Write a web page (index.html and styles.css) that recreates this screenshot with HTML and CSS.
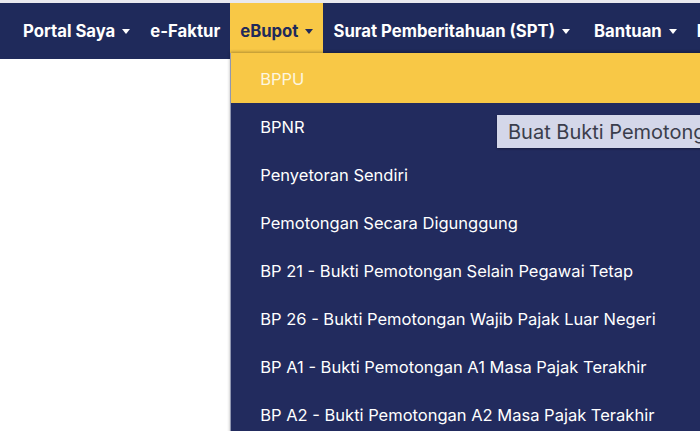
FILE: index.html
```html
<!DOCTYPE html>
<html lang="id">

<head>
    <meta charset="UTF-8">
    <meta name="viewport" content="width=device-width, initial-scale=1.0">
    <title>eBupot</title>
    <link rel="stylesheet" href="styles.css">
</head>

<body>
    <nav class="navbar">
        <ul class="nav-menu">
            <li class="nav-item"><span>Portal Saya</span><i class="caret"></i></li>
            <li class="nav-item"><span>e-Faktur</span></li>
            <li class="nav-item active">
                <span>eBupot</span><i class="caret"></i>
                <ul class="dropdown">
                    <li class="dropdown-item selected">BPPU</li>
                    <li class="dropdown-item">BPNR</li>
                    <li class="dropdown-item">Penyetoran Sendiri</li>
                    <li class="dropdown-item">Pemotongan Secara Digunggung</li>
                    <li class="dropdown-item">BP 21 - Bukti Pemotongan Selain Pegawai Tetap</li>
                    <li class="dropdown-item">BP 26 - Bukti Pemotongan Wajib Pajak Luar Negeri</li>
                    <li class="dropdown-item">BP A1 - Bukti Pemotongan A1 Masa Pajak Terakhir</li>
                    <li class="dropdown-item">BP A2 - Bukti Pemotongan A2 Masa Pajak Terakhir</li>
                </ul>
            </li>
            <li class="nav-item"><span>Surat Pemberitahuan (SPT)</span><i class="caret"></i></li>
            <li class="nav-item wide"><span>Bantuan</span><i class="caret"></i></li>
            <li class="nav-item"><span>Profil</span><i class="caret"></i></li>
        </ul>
    </nav>
    <div class="tooltip">Buat Bukti Pemotongan PPh Unifikasi</div>
</body>

</html>
```

FILE: styles.css
```css
* {
    margin: 0;
    padding: 0;
    box-sizing: border-box;
}

body {
    font-family: Inter, "Liberation Sans", Arial, sans-serif;
    width: 100%;
    height: 100vh;
    overflow: hidden;
    background: #fff;
    border-top: 3px solid #e9e9ef;
}

ul {
    list-style: none;
}

.navbar {
    height: 56px;
    background: #1f2a5b;
    padding-left: 13px;
}

.nav-menu {
    display: flex;
    height: 100%;
    white-space: nowrap;
}

.nav-item {
    position: relative;
    display: flex;
    align-items: center;
    gap: 7px;
    padding: 0 10px;
    color: #fff;
    font-size: 16.7px;
    font-weight: bold;
}

.nav-item.wide {
    padding-left: 14px;
}

.nav-item.active {
    background: #f8c846;
    color: #1f2a5b;
}

.caret {
    display: inline-block;
    border-top: 5px solid currentColor;
    border-left: 4px solid transparent;
    border-right: 4px solid transparent;
    margin-top: 1px;
}

.dropdown {
    position: absolute;
    left: 0;
    top: 50px;
    width: 520px;
    padding-top: 2px;
    background: #222b5e;
    border-left: 1px solid #9096b0;
    box-shadow: 0 -1px 3px rgba(0, 0, 0, 0.3);
}

.dropdown-item {
    height: 48px;
    display: flex;
    align-items: center;
    padding-left: 29px;
    color: #fff;
    font-size: 16.5px;
    font-weight: normal;
}

.dropdown-item.selected {
    background: #f8c846;
    color: #fdf6e0;
    margin-top: -2px;
    height: 50px;
    padding-top: 2px;
}

.tooltip {
    position: absolute;
    left: 497px;
    top: 115px;
    height: 33px;
    padding: 0 11px;
    display: flex;
    align-items: center;
    white-space: nowrap;
    background: #d4d7e9;
    color: #3b3e4c;
    font-size: 20px;
    box-shadow: 0 1px 2px rgba(0, 0, 0, 0.35);
}
```
